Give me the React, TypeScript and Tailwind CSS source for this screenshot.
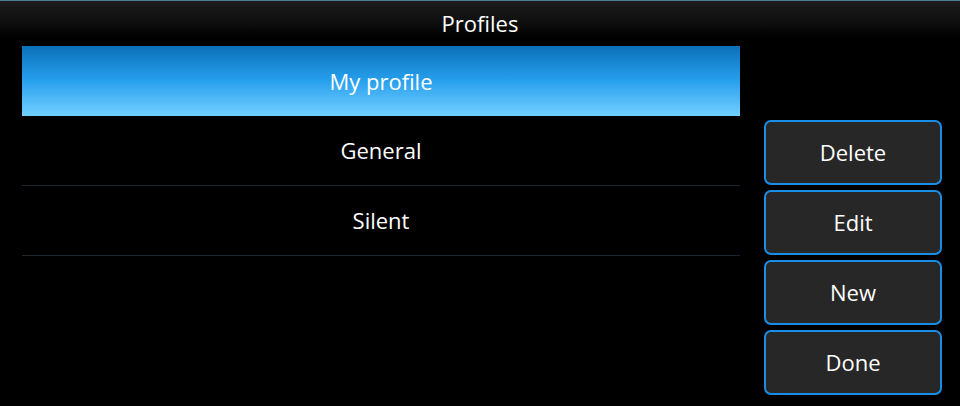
const profiles = ['My profile', 'General', 'Silent'];
const actions = ['Delete', 'Edit', 'New', 'Done'];

export default function App() {
  const selected = 0;

  return (
    <div className="w-[960px] h-[406px] bg-black overflow-hidden text-white font-['Open_Sans',sans-serif] font-medium">
      {/* title bar */}
      <div className="h-[46px] border-t border-[#4d7d92] bg-gradient-to-b from-[#1d1d1d] via-[#0c0c0c] via-55% to-black">
        <div className="h-[44px] flex items-center justify-center text-[22px] leading-none">Profiles</div>
      </div>

      <div className="flex pl-[22px]">
        <ul className="w-[718px] list-none">
          {profiles.map((name, i) => (
            <li
              key={name}
              className={
                i === selected
                  ? 'h-[70px] flex items-center justify-center text-[22px] bg-gradient-to-b from-[#0a70b8] via-[#27a0ee] to-[#70d0ff]'
                  : 'h-[70px] flex items-center justify-center text-[22px] border-b border-[#1b2430]'
              }
            >
              {name}
            </li>
          ))}
        </ul>

        <div className="ml-[24px] pt-[74px] flex flex-col gap-[5px]">
          {actions.map((label) => (
            <button
              key={label}
              className="w-[178px] h-[65px] rounded-[7px] border-2 border-[#1a8ee6] bg-[#272727] text-[22px] text-white flex items-center justify-center"
            >
              {label}
            </button>
          ))}
        </div>
      </div>
    </div>
  );
}
